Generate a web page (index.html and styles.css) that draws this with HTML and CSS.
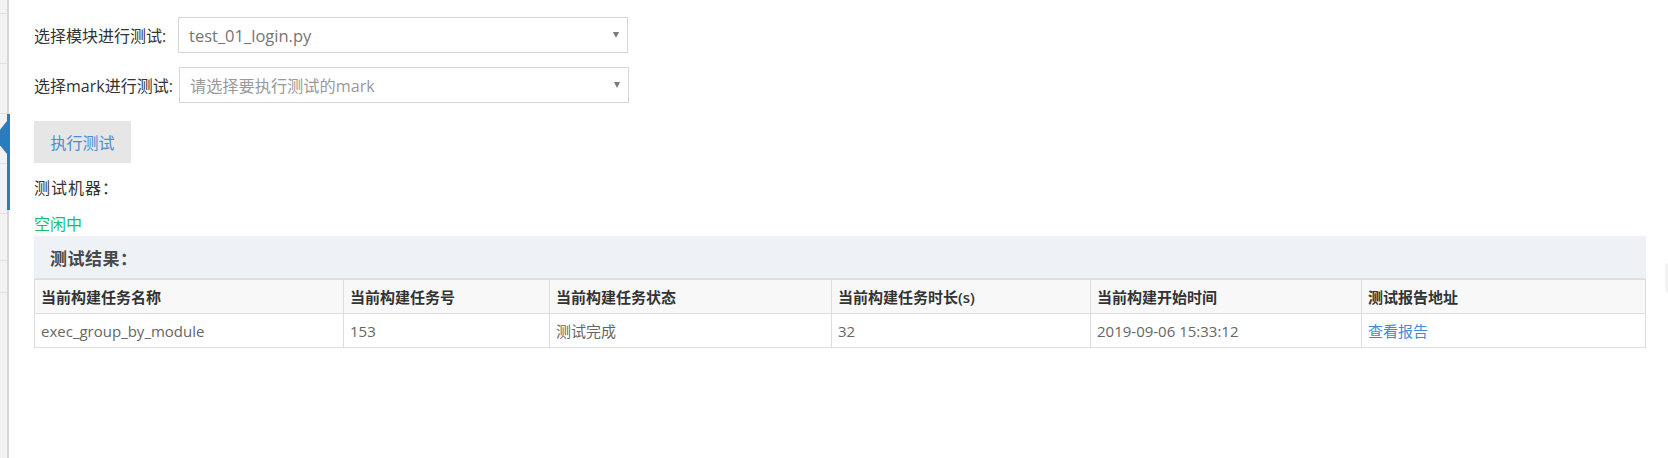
FILE: index.html
```html
<!DOCTYPE html>
<html lang="zh-CN">
<head>
<meta charset="utf-8">
<title>执行测试</title>
<link rel="stylesheet" href="styles.css">
</head>
<body>
<div class="page">
  <aside class="sidebar">
    <div class="side-item"></div>
    <div class="side-item"></div>
    <div class="side-item active">
      <svg class="side-arrow" width="8" height="34" viewBox="0 0 8 34"><polygon points="8,0 0,10 0,23 8,33" fill="#2b7bbf"/></svg>
    </div>
    <div class="side-item"></div>
    <div class="side-item short"></div>
    <div class="side-item tiny"></div>
  </aside>
  <main class="main">
    <div class="form-row">
      <label class="form-label">选择模块进行测试:</label>
      <div class="select">
        <span class="select-value">test_01_login.py</span>
        <span class="select-arrow"></span>
      </div>
    </div>
    <div class="form-row second">
      <label class="form-label">选择mark进行测试:</label>
      <div class="select">
        <span class="select-placeholder">请选择要执行测试的mark</span>
        <span class="select-arrow"></span>
      </div>
    </div>
    <button class="run-btn" type="button">执行测试</button>
    <div class="machine">测试机器：</div>
    <div class="status">空闲中</div>
    <section class="result">
      <div class="result-head">测试结果：</div>
      <table class="result-table">
        <colgroup>
          <col class="c1"><col class="c2"><col class="c3"><col class="c4"><col class="c5"><col class="c6">
        </colgroup>
        <thead>
          <tr>
            <th>当前构建任务名称</th>
            <th>当前构建任务号</th>
            <th>当前构建任务状态</th>
            <th>当前构建任务时长(s)</th>
            <th>当前构建开始时间</th>
            <th>测试报告地址</th>
          </tr>
        </thead>
        <tbody>
          <tr>
            <td>exec_group_by_module</td>
            <td>153</td>
            <td>测试完成</td>
            <td>32</td>
            <td>2019-09-06 15:33:12</td>
            <td><a class="report-link" href="#">查看报告</a></td>
          </tr>
        </tbody>
      </table>
    </section>
  </main>
  <div class="edge-tab"></div>
</div>
</body>
</html>
```
FILE: styles.css
```css
* { box-sizing: border-box; }
html, body { margin: 0; padding: 0; background: #fff; }
body {
  font-family: "Open Sans", "Noto Sans CJK SC", sans-serif;
  font-size: 15px;
  color: #333;
}
.page {
  display: flex;
  width: 1668px;
  height: 458px;
  position: relative;
  overflow: hidden;
}
.sidebar {
  flex: 0 0 9px;
  background: #f2f2f2;
  border-right: 2px solid #d6d6d6;
  display: flex;
  flex-direction: column;
  padding-top: 13px;
}
.side-item {
  height: 50px;
  border-top: 1px solid #e2e2e2;
  position: relative;
}
.side-item.short { height: 47px; }
.side-item.tiny { height: 33px; border-bottom: 1px solid #e2e2e2; }
.side-item.active::after {
  content: "";
  position: absolute;
  right: -3px;
  top: 0;
  width: 3px;
  height: 96px;
  background: #2b7bbf;
}
.side-arrow {
  position: absolute;
  left: -1px;
  top: 7px;
}
.main {
  flex: 1;
  padding: 17px 23px 0 25px;
}
.form-row {
  display: flex;
  align-items: center;
  height: 36px;
  font-size: 16px;
}
.form-row.second { margin-top: 14px; }
.form-label {
  flex: 0 0 144px;
  color: #333;
  white-space: nowrap;
}
.form-row.second .form-label { flex-basis: 145px; }
.select {
  width: 450px;
  height: 36px;
  border: 1px solid #d6d6d6;
  display: flex;
  align-items: center;
  justify-content: space-between;
  padding: 0 8px 0 10px;
}
.select-value { color: #757575; font-size: 16.5px; }
.select-placeholder { color: #999; font-size: 16.2px; }
.select-arrow {
  width: 0;
  height: 0;
  border-left: 3.5px solid transparent;
  border-right: 3.5px solid transparent;
  border-top: 6px solid #7a7a7a;
}
.run-btn {
  display: block;
  margin-top: 18px;
  width: 97px;
  height: 42px;
  border: 0;
  background: #e6e6e6;
  color: #4a8dd3;
  font-family: inherit;
  font-size: 16px;
  padding: 0;
}
.machine {
  margin-top: 15px;
  line-height: 20px;
  font-size: 16px;
  color: #333;
  letter-spacing: 1px;
}
.status {
  margin-top: 16px;
  line-height: 20px;
  font-size: 16px;
  color: #16c06a;
}
.result { margin-top: 2px; }
.result-head {
  height: 43px;
  background: #eef1f6;
  display: flex;
  align-items: center;
  padding-left: 16px;
  font-size: 17px;
  font-weight: 700;
  color: #484848;
  letter-spacing: 0.5px;
  border-bottom: 1px solid #e0e3e8;
}
.result-table {
  width: 100%;
  border-collapse: collapse;
  table-layout: fixed;
}
.c1 { width: 309px; }
.c2 { width: 206px; }
.c3 { width: 282px; }
.c4 { width: 259px; }
.c5 { width: 271px; }
.c6 { width: 284px; }
.result-table th,
.result-table td {
  border: 1px solid #dddddd;
  height: 34px;
  padding: 0 6px;
  text-align: left;
  white-space: nowrap;
}
.result-table th {
  background: #f8f8f8;
  font-weight: 600;
  color: #333;
}
.result-table td { color: #666; }
.report-link { color: #3d8bd6; text-decoration: none; }
.edge-tab {
  position: absolute;
  right: 0;
  top: 263px;
  width: 3px;
  height: 30px;
  background: #f4f4f4;
  border-radius: 3px 0 0 3px;
}
```
